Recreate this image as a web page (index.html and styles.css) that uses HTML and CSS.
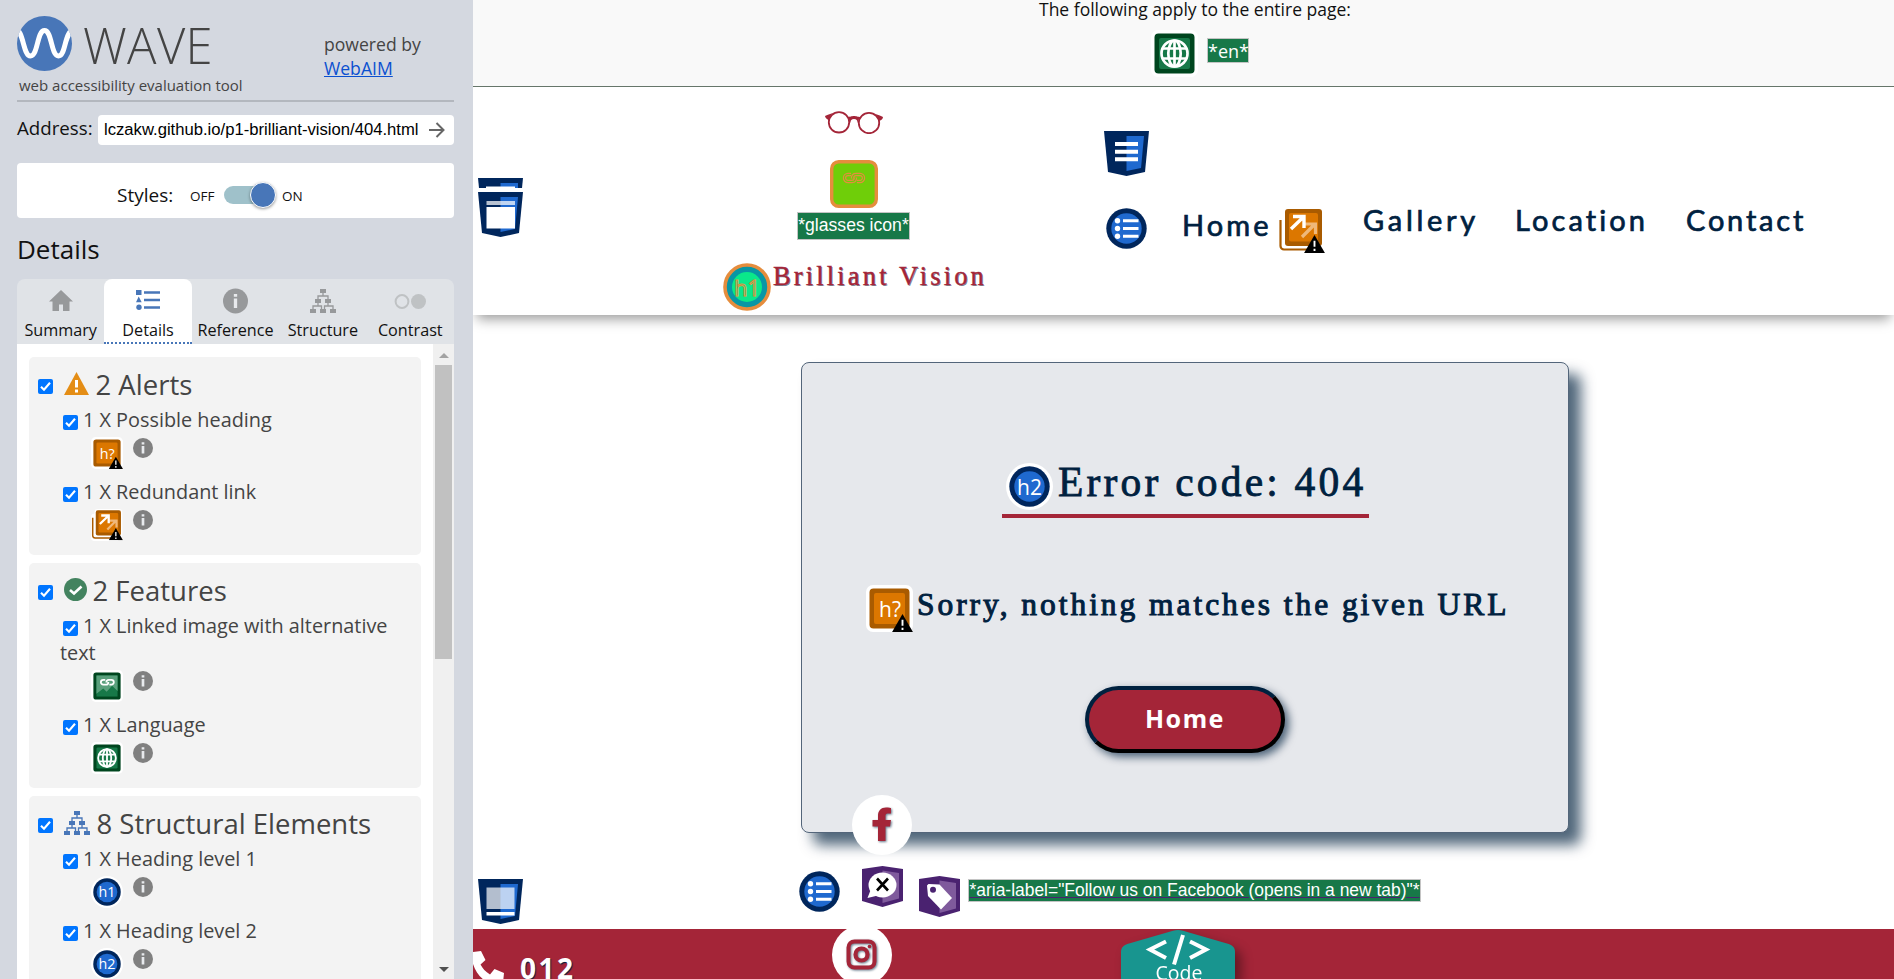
FILE: index.html
```html
<!DOCTYPE html>
<html lang="en">
<head>
<meta charset="utf-8">
<title>WAVE report</title>
<link rel="stylesheet" href="styles.css">
</head>
<body>
<svg class="defs" aria-hidden="true">
  <symbol id="check" viewBox="0 0 15 15"><rect width="15" height="15" rx="2" fill="#0075ff"/><path d="M3 7.8l3 3 6-7" fill="none" stroke="#fff" stroke-width="2.1"/></symbol>
  <symbol id="info" viewBox="0 0 24 24"><circle cx="12" cy="12" r="12" fill="currentColor"/><path d="M10.4 5.2h3.2v2.6h-3.2zM10.4 9.6h3.2v9h-3.2z" class="cut"/></symbol>
  <symbol id="tree" viewBox="0 0 26 24"><path d="M10 0h6v4h-6zM5 10h6v4H5zM15 10h6v4h-6zM0 20h6v4H0zM10 20h6v4h-6zM20 20h6v4h-6z" fill="currentColor"/><path d="M13 4v3M8 10V7h10v3M8 14v3M18 14v3M3 20v-3h8.500v3M14.500 20v-3H23v3" fill="none" stroke="currentColor" stroke-width="1.300"/></symbol>
  <symbol id="corner" viewBox="0 0 22 19"><path d="M11 0l11 19H0z"/><path d="M11 6v6.500M11 14.500v2.500" stroke="#fff" stroke-width="2"/></symbol>
  <symbol id="globe" viewBox="0 0 47 47"><rect width="47" height="47" rx="7" fill="#fff"/><rect x="3.500" y="3.500" width="40" height="40" rx="4" fill="#00461f"/><rect x="8" y="8" width="31" height="31" rx="2" fill="#177848"/><g fill="none" stroke="#fff" stroke-width="2.700"><circle cx="23.500" cy="23.500" r="13"/><ellipse cx="23.500" cy="23.500" rx="6.200" ry="13"/><path d="M23.500 10v27M12 18.500h23M12 28.500h23"/></g></symbol>
  <symbol id="hmaybe" viewBox="0 0 47 47"><rect width="47" height="47" rx="7" fill="#fff"/><rect x="3.500" y="3.500" width="40" height="40" rx="4" fill="#a95b00"/><rect x="8" y="8" width="31" height="31" rx="2" fill="#dc7700"/><text x="24" y="32" text-anchor="middle" font-size="21" fill="#fff">h?</text><use href="#corner" x="26" y="29" width="21" height="18"/></symbol>
  <symbol id="relink" viewBox="0 0 47 47"><path d="M5 7h35v40H5a5 5 0 0 1-5-5V12a5 5 0 0 1 5-5z" fill="#fff"/><rect x="5" y="0" width="41" height="43" rx="5" fill="#fff"/><path d="M2.500 13v26a3.500 3.500 0 0 0 3.500 3.500h30" fill="none" stroke="#a95b00" stroke-width="2.200"/><rect x="7" y="2" width="37" height="37" rx="3" fill="#a95b00"/><rect x="11" y="6" width="29" height="28.500" rx="2" fill="#dc7700"/><path d="M24 30L37 17M27 17h10.500v10" fill="none" stroke="#efb87a" stroke-width="3.200"/><path d="M13 22L26 9.500M15 9.500h11V21" fill="none" stroke="#fff" stroke-width="3.400"/><use href="#corner" x="26" y="28" width="21" height="18"/></symbol>
  <symbol id="chain" viewBox="0 0 48 24"><path d="M21 14.500h-3a3.500 3.500 0 0 0 0 7h4c2.500 0 3.500-1.500 3.500-4M27 21.500h3a3.500 3.500 0 0 0 0-7h-4c-2.500 0-3.500 1.500-3.500 4" fill="none"/></symbol>
  <symbol id="linkimg" viewBox="0 0 47 47"><rect width="47" height="47" rx="7" fill="#fff"/><rect x="3.500" y="3.500" width="40" height="40" rx="4" fill="#00461f"/><rect x="8" y="8" width="31" height="31" fill="#177848"/><path d="M8 8h31v23l-8-8-8 9-5-5-10 8z" fill="#5aa07c"/><use href="#chain" y="0" width="48" height="24" stroke="#fff" stroke-width="2.600"/></symbol>
  <symbol id="disc" viewBox="0 0 47 47"><circle cx="23.500" cy="23.500" r="23.500" fill="#fff"/><circle cx="23.500" cy="23.500" r="20.200" fill="#00265c"/><circle cx="23.500" cy="23.500" r="15.200" fill="#1f69cf"/></symbol>
  <symbol id="list" viewBox="0 0 47 47"><use href="#disc"/><g fill="#fff"><circle cx="14.500" cy="15.800" r="2.700"/><circle cx="14.500" cy="23.500" r="2.700"/><circle cx="14.500" cy="31.200" r="2.700"/><path d="M20 14.300h15.500v3H20zM20 22h15.500v3H20zM20 29.700h15.500v3H20z"/></g></symbol>
  <symbol id="shield" viewBox="0 0 45 45"><path d="M0 0h45l-4 41-18.500 4L4 41z" fill="#00265c"/><path d="M22.500 5H40l-3 32-14.500 3z" fill="#1f69cf"/></symbol>
  <symbol id="aria" viewBox="0 0 41 41"><path d="M0 3L20.500 0 41 3v32l-20.500 6L0 35z" fill="#4a2270"/><path d="M20.500 4.500L37 7v25.500l-16.500 4.500z" fill="#7f5a9c"/></symbol>
</svg>

<div class="app">
<aside class="side">
  <header class="brand">
    <div class="brand-id">
      <div class="brand-row">
        <svg class="logo" viewBox="0 0 55 55"><defs><clipPath id="logoclip"><circle cx="27.500" cy="27.500" r="27.500"/></clipPath></defs><g clip-path="url(#logoclip)"><rect width="55" height="55" fill="#4876b8"/><path d="M-2 12C7 15 6 40 13.500 40S20 14.500 27.500 14.500 34 40 41.500 40 47 16 57 13" fill="none" stroke="#fff" stroke-width="5"/></g></svg>
        <span class="wordmark">WAVE</span>
      </div>
      <div class="tagline">web accessibility evaluation tool</div>
    </div>
    <div class="powered">powered by<br><a href="#">WebAIM</a></div>
  </header>
  <div class="address"><span class="address-label">Address:</span><div class="field"><span>lczakw.github.io/p1-brilliant-vision/404.html</span><svg width="16" height="16" viewBox="0 0 16 16"><path d="M0 8h14M7.500 1L14.500 8l-7 7" fill="none" stroke="#666" stroke-width="2"/></svg></div></div>
  <div class="styles"><span class="styles-label">Styles:</span><span class="small off">OFF</span><span class="switch"><i></i></span><span class="small on">ON</span></div>
  <h2 class="title">Details</h2>
  <nav class="tabs">
    <div class="tab"><svg width="24" height="24" viewBox="0 0 24 24"><path d="M12 1L0 12.500h3.500V22H10v-6.500h4V22h6.500v-9.500H24z" fill="#97999b"/></svg><span>Summary</span></div>
    <div class="tab active"><svg width="24" height="24" viewBox="0 0 24 24"><path d="M0 1h5.500v5H0zM2.700 7.500L5.700 13.200H0zM8 2.200h16v2.500H8zM8 9.700h16v2.500H8zM8 17.200h16v2.500H8z" fill="#4876b8"/><circle cx="3" cy="18.200" r="2.700" fill="#4876b8"/></svg><span>Details</span></div>
    <div class="tab"><svg class="gray" width="25" height="25"><use href="#info"/></svg><span>Reference</span></div>
    <div class="tab"><svg class="gray" width="26" height="24"><use href="#tree"/></svg><span>Structure</span></div>
    <div class="tab"><svg width="32" height="24" viewBox="0 0 32 24"><circle cx="8" cy="12.500" r="6.400" fill="none" stroke="#bfc2c4" stroke-width="2"/><circle cx="24.500" cy="12.500" r="7.500" fill="#bfc2c4"/></svg><span>Contrast</span></div>
  </nav>
  <div class="panel">
    <div class="groups">
      <section class="group">
        <h3><svg class="cb"><use href="#check"/></svg><svg class="gi" width="25" height="23" viewBox="0 0 25 23"><path d="M12.500 0L25 23H0z" fill="#e48d15"/><path d="M12.500 8v7.500M12.500 17.500v3" stroke="#fff" stroke-width="3"/></svg><span>2 Alerts</span></h3>
        <div class="item"><p><svg class="cb"><use href="#check"/></svg>1 X Possible heading</p><div class="icons"><svg class="ico"><use href="#hmaybe"/></svg><svg class="inf"><use href="#info"/></svg></div></div>
        <div class="item"><p><svg class="cb"><use href="#check"/></svg>1 X Redundant link</p><div class="icons"><svg class="ico"><use href="#relink"/></svg><svg class="inf"><use href="#info"/></svg></div></div>
      </section>
      <section class="group">
        <h3><svg class="cb"><use href="#check"/></svg><svg class="gi ok" width="23" height="23" viewBox="0 0 23 23"><circle cx="11.500" cy="11.500" r="11.500" fill="#43835f"/><path d="M6 12l4 3.500 7.500-7" fill="none" stroke="#fff" stroke-width="2.600"/></svg><span>2 Features</span></h3>
        <div class="item"><p><svg class="cb"><use href="#check"/></svg>1 X Linked image with alternative text</p><div class="icons"><svg class="ico"><use href="#linkimg"/></svg><svg class="inf"><use href="#info"/></svg></div></div>
        <div class="item"><p><svg class="cb"><use href="#check"/></svg>1 X Language</p><div class="icons"><svg class="ico"><use href="#globe"/></svg><svg class="inf"><use href="#info"/></svg></div></div>
      </section>
      <section class="group">
        <h3><svg class="cb"><use href="#check"/></svg><svg class="gi blue" width="26" height="24"><use href="#tree"/></svg><span>8 Structural Elements</span></h3>
        <div class="item"><p><svg class="cb"><use href="#check"/></svg>1 X Heading level 1</p><div class="icons"><svg class="ico" viewBox="0 0 47 47"><use href="#disc"/><text x="23.500" y="31.500" text-anchor="middle" font-size="21" fill="#fff">h1</text></svg><svg class="inf"><use href="#info"/></svg></div></div>
        <div class="item"><p><svg class="cb"><use href="#check"/></svg>1 X Heading level 2</p><div class="icons"><svg class="ico" viewBox="0 0 47 47"><use href="#disc"/><text x="23.500" y="31.500" text-anchor="middle" font-size="21" fill="#fff">h2</text></svg><svg class="inf"><use href="#info"/></svg></div></div>
      </section>
    </div>
    <div class="scroll"><svg width="10" height="5" viewBox="0 0 10 5"><path d="M5 0l5 5H0z" fill="#a3a3a3"/></svg><div class="thumb"></div><svg width="10" height="5" viewBox="0 0 10 5"><path d="M0 0h10L5 5z" fill="#505050"/></svg></div>
  </div>
</aside>

<main class="page">
  <div class="notice">
    <div class="notice-text">The following apply to the entire page:</div>
    <div class="notice-row"><svg width="47" height="47"><use href="#globe"/></svg><span class="chip en">*en*</span></div>
  </div>
  <header class="site">
    <svg class="mark-header" width="45" height="59" viewBox="0 0 45 59"><path d="M0 0h45l-1 10H1z" fill="#00265c"/><path d="M22.500 5H40v5H22.500z" fill="#1f69cf"/><path d="M8 8.500h29v2H8z" fill="#fff"/><use href="#shield" y="14" width="45" height="45"/><path d="M8.500 23H37v4H8.500z" fill="#fff" opacity=".72"/><path d="M8.500 29H37v21.500H8.500z" fill="#fff"/></svg>
    <div class="identity">
      <svg class="glasses" width="58" height="23" viewBox="0 0 58 23"><g fill="none" stroke="#a42538"><circle cx="14" cy="11.300" r="10.200" stroke-width="1.800"/><circle cx="44" cy="12" r="10.200" stroke-width="1.800"/></g><path d="M0 5c2-1 5-2 8-3-2 2-3.500 4-4 8-1-2-3.500-2-4-5zM58 6c-2-1-4-2-8-3 2 2 3.500 4 4 7 2-1 3.500-1 4-4zM22 6c4 0 4-1 7-1s3 1 7 1c-3 2-2 4-3.500 6 0-3-1-4-3.500-4s-3.500 1-3.500 4C24.500 10 24 8 22 6z" fill="#a42538"/></svg>
      <svg class="alticon" width="48" height="48" viewBox="0 0 48 48"><rect x="1.700" y="1.700" width="44.600" height="44.600" rx="7" fill="#6fce09" stroke="#e58d3d" stroke-width="3.400"/><use href="#chain" width="48" height="24" stroke="#e58d3d" stroke-width="3.400"/><use href="#chain" width="48" height="24" stroke="#6fce09" stroke-width="1.100"/></svg>
      <span class="chip alt">*glasses icon*</span>
      <h1><svg width="48" height="48" viewBox="0 0 48 48"><circle cx="24" cy="24" r="22" fill="#0896a5" stroke="#e58d3d" stroke-width="3.600"/><circle cx="24" cy="24" r="15" fill="#0ae88a"/><text x="24" y="32.500" text-anchor="middle" font-size="22" fill="none" stroke="#e58d3d">h1</text></svg><span>Brilliant Vision</span></h1>
    </div>
    <nav class="site-nav">
      <svg class="nav-mark" width="45" height="45" viewBox="0 0 45 45"><use href="#shield"/><path d="M11 11h23v4H11zM11 18.700h23v4H11zM11 26.300h23v4H11z" fill="#fff"/></svg>
      <div class="nav-row"><svg class="nav-list" width="47" height="47"><use href="#list"/></svg><a class="n-home">Home</a><svg class="nav-re" width="47" height="47"><use href="#relink"/></svg><a class="n-gal">Gallery</a><a class="n-loc">Location</a><a class="n-con">Contact</a></div>
    </nav>
  </header>
  <section class="content">
    <div class="card">
      <h2><svg width="47" height="47" viewBox="0 0 47 47"><use href="#disc"/><text x="23.500" y="31.500" text-anchor="middle" font-size="21" fill="#fff">h2</text></svg><span>Error code: 404</span></h2>
      <p class="sorry"><svg width="47" height="47"><use href="#hmaybe"/></svg><span>Sorry, nothing matches the given URL</span></p>
      <a class="button">Home</a>
    </div>
    <div class="pins">
      <svg class="pin-footer" width="45" height="45" viewBox="0 0 45 45"><use href="#shield"/><path d="M8.500 8.500h28V30h-28z" fill="#fff" opacity=".7"/><path d="M8.500 33h28v3.500h-28z" fill="#fff"/></svg>
      <svg class="pin-list" width="47" height="47"><use href="#list"/></svg>
      <svg class="pin-x" width="41" height="41" viewBox="0 0 41 41"><use href="#aria"/><ellipse cx="20.500" cy="19" rx="14" ry="12.500" fill="#fff"/><path d="M9 23l-3.500 9L18 29z" fill="#fff"/><path d="M15 12.500l11 12M26 12.500l-11 12" stroke="#000" stroke-width="2.600"/></svg>
      <svg class="pin-tag" width="41" height="41" viewBox="0 0 41 41"><use href="#aria"/><path d="M8 9.500L9.500 8l11 .5L33 22 22 33.500 9 20z" fill="#fff"/><circle cx="14" cy="13.800" r="3" fill="#4a2270"/></svg>
      <span class="chip aria">*aria-label="Follow us on Facebook (opens in a new tab)"*</span>
    </div>
    <div class="facebook"><svg width="21" height="36" viewBox="0 0 21 36"><path d="M6 34V19.500H.5V13H6V9c0-5.500 3-8.500 8-8.500 2.500 0 5 .5 5 .5v5.500h-3C13.500 6.500 13.500 8 13.500 9.500V13H19l-1 6.500h-4.500V34z" fill="#a42538"/></svg></div>
  </section>
  <footer class="foot">
    <svg class="phone" width="32" height="32" viewBox="0 0 32 32"><path d="M0 1L8 0l4.500 9-5 4.500c2 4 5 7 9.500 10l4.500-5.500L31 22l-1 10H0z" fill="#fff"/><path d="M0 13c3 9 8 15 16 19H0z" fill="#a42538"/></svg>
    <span class="tel">012</span>
    <div class="insta"><svg width="32" height="32" viewBox="0 0 32 32" fill="none" stroke="#a42538"><rect x="2.500" y="2.500" width="26" height="26" rx="6" stroke-width="4"/><circle cx="15.500" cy="15.500" r="6" stroke-width="4.200"/><circle cx="23.500" cy="7.500" r="1.800" fill="#a42538" stroke="none"/></svg></div>
    <div class="badge"><svg width="114" height="49" viewBox="0 0 114 49"><path d="M0 49V22c0-5 3-7 8-8.500L52 .8q5-1.400 10 0L106 13.500c5 1.500 8 3.500 8 8.500v27z" fill="#18958f"/><path d="M45 11.500L29 19.500l16 8.500M69 11.500l16 8-16 8.500M62 5L53 34.500" fill="none" stroke="#fff" stroke-width="4"/><text x="58" y="49.500" text-anchor="middle" font-size="19.500" fill="#fff">Code</text></svg></div>
  </footer>
</main>
</div>
</body>
</html>
```
FILE: styles.css
```css
* { box-sizing: border-box; }
body { margin: 0; font-family: "Open Sans", sans-serif; color: #111; background: #fff; overflow: hidden; }
h1, h2, h3, p { margin: 0; font-weight: 400; }
svg { flex: none; display: block; }
.defs { display: none; }
.app { display: flex; width: 1894px; height: 979px; overflow: hidden; }

/* sidebar */
.side { width: 473px; height: 979px; flex: none; background: #d4d8e0; padding: 16px 19px 0 17px; display: flex; flex-direction: column; }
.brand { display: flex; height: 86px; border-bottom: 2px solid #b3b7be; color: #444; flex: none; }
.brand-id { width: 307px; }
.brand-row { display: flex; height: 55px; }
.logo { width: 55px; height: 55px; }
.wordmark { font-size: 49px; line-height: 55px; font-weight: 300; margin-left: 11px; padding-top: 2px; letter-spacing: .4px; }
.tagline { font-size: 15px; line-height: 20px; margin: 4px 0 0 2px; }
.powered { font-size: 17.6px; line-height: 24px; padding-top: 16px; white-space: nowrap; }
.powered a { color: #0b50d0; }
.address { display: flex; height: 30px; margin-top: 13px; flex: none; }
.address-label { width: 81px; font-size: 18.7px; line-height: 25px; }
.field { flex: 1; background: #fff; border-radius: 4px; display: flex; align-items: center; padding: 0 9px 0 6px; justify-content: space-between; font: 16.650px "Liberation Sans", sans-serif; color: #000; white-space: nowrap; }
.styles { flex: none; margin-top: 18px; height: 55px; background: #fff; border-radius: 4px; display: flex; align-items: center; padding: 8px 0 0 100px; white-space: nowrap; }
.styles-label { font-size: 19px; width: 73px; }
.small { font-size: 13.5px; padding-top: 2px; }
.off { width: 34px; }
.switch { width: 52px; height: 18px; border-radius: 9px; background: linear-gradient(90deg, #9fc1ca 40px, #fff 40px); display: flex; justify-content: flex-end; align-items: center; }
.switch i { flex: none; width: 26px; height: 26px; border-radius: 50%; background: #4876b8; border: 1px solid #fff; box-shadow: 0 1px 3px #0006; }
.on { margin-left: 6px; }
.title { font-size: 26px; line-height: 36px; margin-top: 13px; height: 48px; flex: none; }
.tabs { display: flex; height: 65px; flex: none; background: #e0e3e7; border-radius: 8px 8px 0 0; }
.tab { width: 87.4px; display: flex; flex-direction: column; align-items: center; font-size: 16.200px; padding-top: 9px; }
.tab svg { margin-bottom: 5px; height: 26px; }
.tab span { line-height: 22px; }
.active { background: #fff; border-radius: 8px 8px 0 0; border-bottom: 2px dotted #4876b8; }
.gray { color: #97999b; }
.cut { fill: #e8eaed; }
.panel { display: flex; height: 635px; background: #fff; }
.groups { width: 416px; padding: 13px 12px 0; display: flex; flex-direction: column; gap: 8px; overflow: hidden; }
.group { background: #f3f3f3; border-radius: 5px; padding: 10px 9px 5px; color: #444; flex: none; }
.group h3 { display: flex; height: 39px; font-size: 27.5px; line-height: 36px; align-items: flex-start; }
.cb { width: 15px; height: 15px; }
.group h3 .cb { margin: 12px 11px 0 0; }
.gi { margin: 5px 6.5px 0 0; }
.gi.ok { margin-right: 5.500px; }
.blue { color: #4876b8; }
.item { padding-left: 22px; min-height: 70px; }
.item p { font-size: 19.850px; line-height: 27px; width: 345px; }
.item p .cb { display: inline-block; margin: 0 5px 0 3px; vertical-align: -3px; }
.icons { display: flex; height: 45px; align-items: flex-start; }
.ico { width: 32px; height: 32px; margin: 4px 10px 0 31px; }
.inf { width: 20px; height: 20px; margin-top: 5px; color: #808080; }
.scroll { width: 21px; background: #f0f0f0; display: flex; flex-direction: column; align-items: center; padding-top: 9px; }
.thumb { width: 17px; height: 294px; margin: 7px 0 308px; background: #c1c1c1; flex: none; }

/* page */
.page { flex: 1; display: flex; flex-direction: column; color: #00213f; }
.notice { height: 87px; background: #f9f9f9; border-bottom: 1px solid #66766a; color: #111; flex: none; }
.notice-text { font-size: 17.5px; line-height: 19px; height: 27px; padding-left: 566px; }
.notice-row { display: flex; padding: 3px 0 0 678px; }
.chip { background: #177848; color: #fff; border: 1px solid #c4c4c4; font: 18px "Liberation Sans", sans-serif; white-space: nowrap; text-align: center; }
.en { margin: 8px 0 0 9px; width: 42px; height: 25px; font: 18px/25px "Open Sans", sans-serif; }
.site { height: 228px; flex: none; display: flex; align-items: flex-start; position: relative; background: #fff; box-shadow: 0 8px 12px -4px #0006; clip-path: inset(0 0 -30px 0); }
.mark-header { margin: 91px 0 0 5px; }
.identity { width: 263px; margin: 24px 0 0 200px; display: flex; flex-direction: column; }
.glasses { margin-left: 102px; }
.alticon { margin: 26px 0 4px 107px; }
.alt { margin-left: 74px; width: 113px; height: 28px; line-height: 24px; font-size: 17.6px; }
.identity h1 { display: flex; margin-top: 23px; white-space: nowrap; font: 26.500px/40px "Liberation Serif", serif; letter-spacing: 3.150px; color: #a42538; text-shadow: 1px 1px 0 #00213f88; -webkit-text-stroke: .4px #a42538; }
.identity h1 svg { overflow: visible; letter-spacing: 0; text-shadow: none; font-family: "Open Sans", sans-serif; -webkit-text-stroke: 0; }
.identity h1 span { margin: -7px 0 0 2px; }
.site-nav { margin: 44px 0 0 118px; }
.nav-row { display: flex; margin: 29px 0 0 -1px; font: 29px/36px Lato, sans-serif; letter-spacing: 3.100px; white-space: nowrap; -webkit-text-stroke: .7px #00213f; }
.nav-list { -webkit-text-stroke: 0; }
.n-home { margin: 2px 0 0 32px; width: 96px; }
.nav-re { margin-top: 2px; }
.n-gal { margin: -3px 0 0 38px; width: 152px; letter-spacing: 3.700px; }
.n-loc { margin-top: -3px; width: 171px; }
.n-con { margin-top: -3px; letter-spacing: 2.800px; }
.content { height: 614px; flex: none; padding-top: 47px; position: relative; }
.card { margin-left: 328px; width: 768px; height: 471px; background: #e6e8ec; border: 1px solid #53657a; border-radius: 8px; box-shadow: 12px 12px 14px #00213fb0; display: flex; flex-direction: column; align-items: flex-start; }
.card h2 { margin: 92px 0 0 200px; width: 367px; height: 63px; border-bottom: 4px solid #a42538; display: flex; padding: 8px 0 0 4px; font: 41.500px/50px "Liberation Serif", serif; letter-spacing: 3.200px; white-space: nowrap; -webkit-text-stroke: .8px #00213f; }
.card h2 svg, .sorry svg { font-family: "Open Sans", sans-serif; letter-spacing: 0; -webkit-text-stroke: 0; }
.card h2 span { margin: -6px 0 0 5px; }
.sorry { display: flex; margin: 67px 0 0 64px; font: 31.500px/40px "Liberation Serif", serif; letter-spacing: 2.950px; white-space: nowrap; -webkit-text-stroke: 1px #00213f; }
.sorry span { margin: 0 0 0 4px; }
.button { margin: 54px 0 0 283px; width: 200px; height: 67px; border: 4px solid; border-color: #00213f #000 #000 #00213f; border-radius: 34px; background: #a42538; color: #fff; display: flex; align-items: center; justify-content: center; font: 700 25px "Noto Sans", sans-serif; letter-spacing: 1.500px; padding-bottom: 4px; box-shadow: 4px 4px 8px #00213faa; }
.pins { display: flex; align-items: flex-start; padding: 33px 0 0 5px; }
.pin-footer { margin-top: 13px; }
.pin-list { margin: 2px 0 0 273px; }
.pin-x { margin-left: 19px; }
.pin-tag { margin: 10px 8px 0 16px; }
.aria { margin-top: 13px; width: 453px; height: 23px; line-height: 21px; font-size: 17.450px; text-decoration: underline; text-decoration-color: #4a2270; }
.facebook { position: absolute; left: 379px; top: 480px; width: 60px; height: 60px; border-radius: 50%; background: #fff; display: flex; align-items: center; justify-content: center; }
.facebook svg, .insta svg { filter: drop-shadow(1px 1px 1px #00213f99); }
.foot { height: 50px; flex: none; background: #a42538; display: flex; align-items: flex-start; position: relative; overflow: hidden; }
.phone { margin-top: 22px; }
.tel { font: 700 28px/34px "Noto Sans", sans-serif; letter-spacing: 2.500px; color: #fff; margin: 22px 0 0 15px; width: 312px; text-shadow: 1px 1px 1px #00213f; }
.insta { width: 60px; height: 60px; margin-top: -4px; border-radius: 50%; background: #fff; display: flex; align-items: center; justify-content: center; flex: none; }
.badge { margin: 1px 0 0 229px; filter: drop-shadow(6px 6px 6px #0006); }
```
